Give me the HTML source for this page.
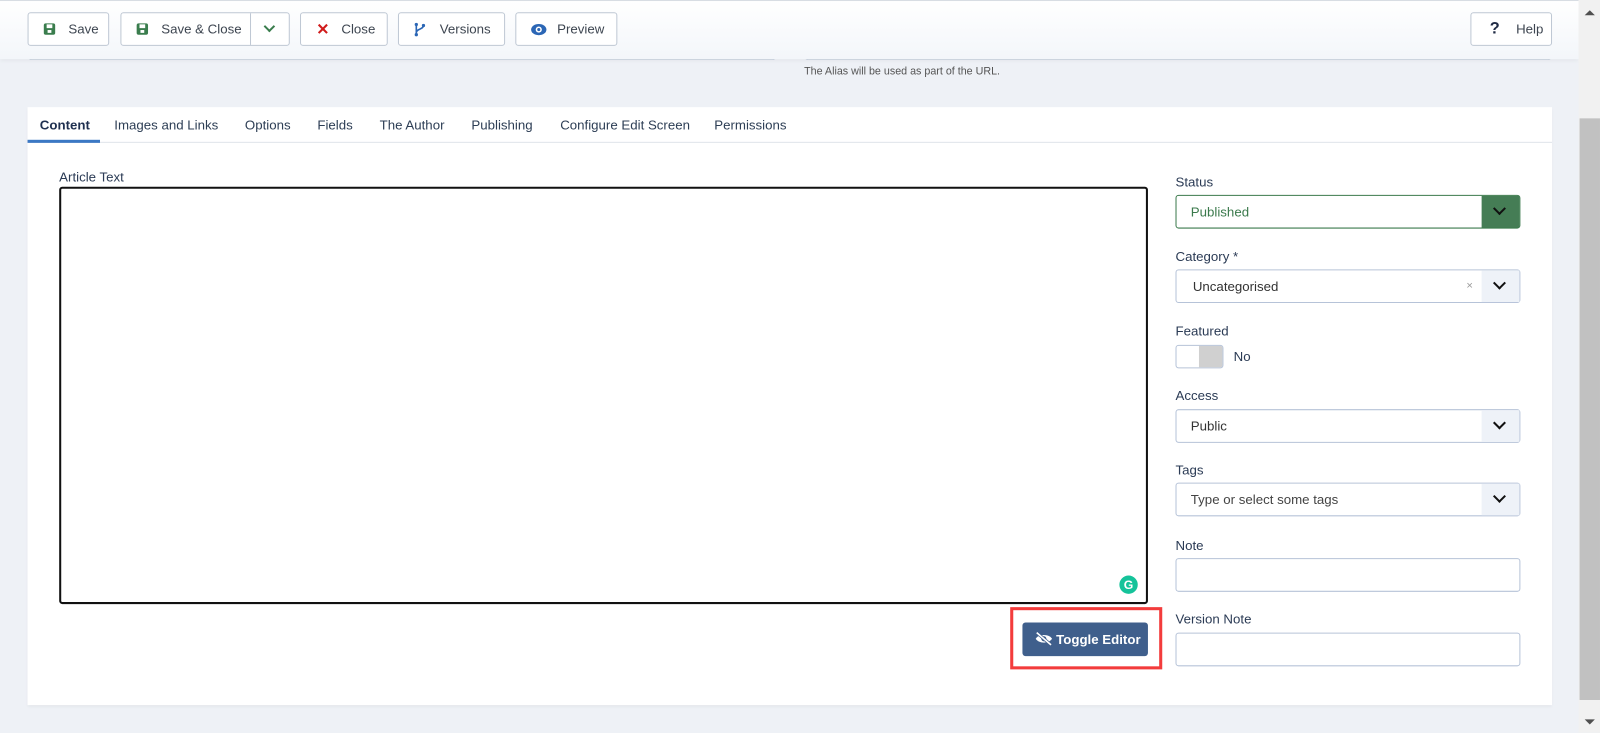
<!DOCTYPE html>
<html><head><meta charset="utf-8"><style>
*{box-sizing:border-box;margin:0;padding:0}
html,body{width:1600px;height:732px;overflow:hidden;background:#eef1f6}
#w{position:absolute;left:0;top:0;width:1568px;height:718px;transform:scale(1.0204);transform-origin:0 0;font-family:"Liberation Sans",sans-serif;color:#22262a;font-size:13px}
.abs{position:absolute}
.tb{position:absolute;top:0;left:0;width:1547px;height:58px;background:linear-gradient(#fff,#f3f6fa);border-top:1px solid #d8dde3;box-shadow:0 2px 4px rgba(0,0,0,.05)}
.btn{position:absolute;top:12px;height:33px;border:1px solid #bfc8d4;border-radius:3px;background:#fff;font-size:13px;color:#3d4550;display:flex;align-items:center}
.lbl{position:absolute;font-size:13px;color:#2b3b55}
.sel{position:absolute;left:1152px;width:338px;height:33px;border:1px solid #b6c3d8;border-radius:3px;background:#fff;font-size:13px;color:#333;padding-left:14px;line-height:31px}
.sel .ar{position:absolute;right:0;top:0;width:37px;height:31px;background:#eef2f8}
.chev{position:absolute;left:13px;top:8px;width:9px;height:9px;border-right:2px solid #111;border-bottom:2px solid #111;transform:rotate(45deg)}
.tabs span{position:absolute;top:115px;font-size:13px;color:#2d3e55}
</style></head><body><div id="w">
<div class="abs" style="left:27px;top:45px;width:734px;height:14px;border:1px solid #c5cfdc;border-top:none;border-radius:0 0 4px 4px;background:#fff"></div>
<div class="abs" style="left:788px;top:45px;width:733px;height:14px;border:1px solid #c5cfdc;border-top:none;border-radius:0 0 4px 4px;background:#fff"></div>
<div class="abs" style="left:788px;top:64px;font-size:10.5px;color:#555">The Alias will be used as part of the URL.</div>
<div class="tb"></div>
<div class="btn" style="left:27px;width:80px"><svg style="margin-left:14px" width="13" height="13" viewBox="0 0 14 14"><rect x="1" y="1" width="12" height="12" rx="2" fill="#3a7d4d"/><rect x="4" y="2" width="6" height="4" fill="#fff"/><rect x="5" y="8" width="4" height="3" fill="#fff"/></svg><span style="margin-left:12px">Save</span></div>
<div class="btn" style="left:118px;width:166px"><svg style="margin-left:14px" width="13" height="13" viewBox="0 0 14 14"><rect x="1" y="1" width="12" height="12" rx="2" fill="#3a7d4d"/><rect x="4" y="2" width="6" height="4" fill="#fff"/><rect x="5" y="8" width="4" height="3" fill="#fff"/></svg><span style="margin-left:12px">Save &amp; Close</span><div style="position:absolute;left:126px;top:0;height:31px;border-left:1px solid #bfc8d4;width:39px"><div style="position:absolute;left:14px;top:9px;width:8px;height:8px;border-right:2px solid #3a7d4d;border-bottom:2px solid #3a7d4d;transform:rotate(45deg)"></div></div></div>
<div class="btn" style="left:294px;width:86px"><span style="margin-left:15px;color:#d01b1b;font-weight:bold;font-size:15px">✕</span><span style="margin-left:12px">Close</span></div>
<div class="btn" style="left:390px;width:105px"><svg style="margin-left:15px" width="11" height="14" viewBox="0 0 11 14"><circle cx="2" cy="2" r="1.6" fill="#2b66b5"/><circle cx="2" cy="12" r="1.6" fill="#2b66b5"/><circle cx="9" cy="3" r="1.6" fill="#2b66b5"/><path d="M2 2V12M9 3C9 7 2 6 2 10" stroke="#2b66b5" stroke-width="1.6" fill="none"/></svg><span style="margin-left:14px">Versions</span></div>
<div class="btn" style="left:505px;width:100px"><svg style="margin-left:14px" width="16" height="12" viewBox="0 0 16 12"><ellipse cx="8" cy="6" rx="7.5" ry="5.5" fill="#2b66b5"/><circle cx="8" cy="6" r="3" fill="#fff"/><circle cx="8" cy="6" r="1.5" fill="#2b66b5"/></svg><span style="margin-left:10px">Preview</span></div>
<div class="btn" style="left:1441px;width:80px"><span style="margin-left:18px;font-weight:bold;font-size:16px;color:#1f2a44">?</span><span style="margin-left:16px">Help</span></div>
<div class="abs" style="left:1547px;top:0;width:21px;height:718px;background:#f1f1f1"></div>
<div class="abs" style="left:1548px;top:116px;width:20px;height:570px;background:#c1c1c1"></div>
<div class="abs" style="left:1553px;top:10px;width:0;height:0;border-left:5px solid transparent;border-right:5px solid transparent;border-bottom:5px solid #505050"></div>
<div class="abs" style="left:1553px;top:705px;width:0;height:0;border-left:5px solid transparent;border-right:5px solid transparent;border-top:5px solid #505050"></div>
<div class="abs" style="left:27px;top:105px;width:1494px;height:586px;background:#fff;box-shadow:0 2px 3px rgba(0,0,0,.05)"></div>
<div class="abs" style="left:27px;top:139px;width:1494px;height:1px;background:#dfe4ea"></div>
<div class="abs" style="left:27px;top:137px;width:71px;height:3px;background:#3b78c4"></div>
<div class="tabs"><span style="left:39px;font-weight:bold;color:#1f3050">Content</span><span style="left:112px">Images and Links</span><span style="left:240px">Options</span><span style="left:311px">Fields</span><span style="left:372px">The Author</span><span style="left:462px">Publishing</span><span style="left:549px">Configure Edit Screen</span><span style="left:700px">Permissions</span></div>
<div class="lbl" style="left:58px;top:166px">Article Text</div>
<div class="abs" style="left:58px;top:183px;width:1067px;height:409px;border:2px solid #111;border-radius:3px"></div>
<div class="abs" style="left:1097px;top:564px;width:18px;height:18px;border-radius:50%;background:#15c39a;color:#fff;font-weight:bold;font-size:12px;text-align:center;line-height:18px">G</div>
<div class="abs" style="left:990px;top:595px;width:149px;height:61px;border:3px solid #f33c3c"></div>
<div class="abs" style="left:1002px;top:610px;width:123px;height:33px;background:#3f5f8c;border-radius:3px;color:#fff;font-weight:bold;font-size:13px;line-height:33px;padding-left:33px">Toggle Editor</div>
<svg class="abs" style="left:1014px;top:619px" width="18" height="14" viewBox="0 0 18 14"><path d="M1 7C4 2 14 2 17 7C14 12 4 12 1 7Z" fill="#fff"/><circle cx="9" cy="7" r="2.5" fill="#3f5f8c"/><path d="M2 1L16 13" stroke="#3f5f8c" stroke-width="3"/><path d="M2 1L16 13" stroke="#fff" stroke-width="1.6"/></svg>
<div class="lbl" style="left:1152px;top:171px">Status</div>
<div class="sel" style="top:191px;border-color:#3b7a4c;color:#3b7a4c">Published<div class="ar" style="background:#457d55"><div class="chev"></div></div></div>
<div class="lbl" style="left:1152px;top:244px">Category *</div>
<div class="sel" style="top:264px;padding-left:16px">Uncategorised<span style="position:absolute;left:284px;color:#999;font-size:11px">×</span><div class="ar"><div class="chev"></div></div></div>
<div class="lbl" style="left:1152px;top:317px">Featured</div>
<div class="abs" style="left:1152px;top:338px;width:47px;height:23px;border:1px solid #b6c3d8;border-radius:3px;background:#fff;overflow:hidden"><div style="position:absolute;right:0;top:0;width:23px;height:21px;background:#d0d0d0"></div></div>
<div class="lbl" style="left:1209px;top:342px">No</div>
<div class="lbl" style="left:1152px;top:380px">Access</div>
<div class="sel" style="top:401px">Public<div class="ar"><div class="chev"></div></div></div>
<div class="lbl" style="left:1152px;top:453px">Tags</div>
<div class="sel" style="top:473px;color:#444">Type or select some tags<div class="ar"><div class="chev"></div></div></div>
<div class="lbl" style="left:1152px;top:527px">Note</div>
<div class="sel" style="top:547px"></div>
<div class="lbl" style="left:1152px;top:599px">Version Note</div>
<div class="sel" style="top:620px"></div>
</div></body></html>
